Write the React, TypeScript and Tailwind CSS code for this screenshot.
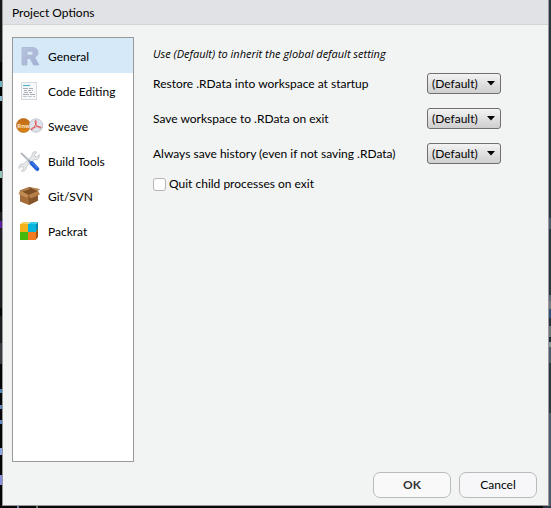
import { useState } from "react";
import type { ReactNode } from "react";

function RIcon() {
  return (
    <svg width="26" height="24" viewBox="-1 0 26 24" aria-hidden="true">
      <defs>
        <linearGradient id="r-fill" x1="0" y1="0" x2="1" y2="1">
          <stop offset="0" stopColor="#b9c3de" />
          <stop offset="1" stopColor="#a3b0d3" />
        </linearGradient>
      </defs>
      <path
        fillRule="evenodd"
        d="M5 3.500h9.500c4.500 0 6.500 1.800 6.500 5 0 2.500-1.200 4-3.200 4.800l4.200 7.700h-5.500l-3.300-6.500H10V21H5zM10 7.200v4h3.600c1.600 0 2.400-.7 2.400-2s-.8-2-2.400-2z"
        fill="url(#r-fill)"
        stroke="#a5b1cf"
        strokeWidth="0.700"
      />
    </svg>
  );
}

function CodeIcon() {
  return (
    <svg width="26" height="24" viewBox="-1 0 26 24" aria-hidden="true">
      <rect x="4.500" y="3.500" width="15" height="17" fill="#f7f8fa" stroke="#d5d8dd" />
      <path d="M6 6.500h7" stroke="#4fb4cc" strokeWidth="1.200" />
      <g stroke="#a9adb3" strokeWidth="1">
        <path d="M6 9.500h10" strokeDasharray="5 1" />
        <path d="M7 11.500h9" strokeDasharray="3 1" />
        <path d="M7 13.500h8" strokeDasharray="4 1" />
        <path d="M6 15.500h12" strokeDasharray="6 1" />
        <path d="M6 17.500h12" stroke="#c3c6cb" strokeDasharray="4 1" />
      </g>
    </svg>
  );
}

function SweaveIcon() {
  return (
    <svg width="28" height="24" viewBox="0 0 28 24" aria-hidden="true">
      <defs>
        <linearGradient id="rnw-fill" x1="0" y1="0" x2="0" y2="1">
          <stop offset="0" stopColor="#c06c1a" />
          <stop offset="1" stopColor="#d98413" />
        </linearGradient>
      </defs>
      <circle cx="7.500" cy="11.500" r="7" fill="url(#rnw-fill)" stroke="#b9691c" strokeWidth="0.700" />
      <text x="7.700" y="14" textAnchor="middle" fontSize="6" fontWeight="bold" fill="#fbe3c3" fontFamily="Open Sans, sans-serif">
        Rnw
      </text>
      <circle cx="20" cy="11.500" r="6.700" fill="#dfe3e9" stroke="#b5bcc7" strokeWidth="0.800" />
      <path
        d="M19.600 6.500c1.200 0 .6 3.200-.8 5.800-1.300 2.500-3 4-3.700 3.400-.7-.9 2.300-2.500 5.200-3 2.800-.5 5 .1 4.800 1-.3 1-2.800-.3-4.300-2.200-1.400-1.800-2.400-5-1.200-5z"
        fill="none"
        stroke="#e0565c"
        strokeWidth="1"
      />
    </svg>
  );
}

function ToolsIcon() {
  return (
    <svg width="26" height="24" viewBox="0 0 26 24" aria-hidden="true">
      <path
        d="M17.200 3.300c1.300-.7 2.700-.7 3.700-.2l-2.400 2.500.4 2 2 .4 2.200-2.400c.5 1.300.2 3-.8 4-1 1-2.400 1.300-3.700.9L10 18c.2 1.300-.2 2.700-1.200 3.500-1 .9-2.200 1-3.500.6l2.200-2.400-.5-1.800-1.900-.4L3 19.600c-.4-1.200 0-2.800 1-3.800s2.200-1.100 3.500-.7L16 7.200c-.3-1.400.2-2.900 1.200-3.900z"
        fill="#e6e8ea"
        stroke="#babfc4"
        strokeWidth="0.800"
      />
      <path d="M5.500 4.500 14 12.500" stroke="#b4bac0" strokeWidth="2" strokeLinecap="round" />
      <path d="M12.500 11.500 15 14" stroke="#8396b5" strokeWidth="2" />
      <path d="m15.800 14.300 5.400 5.600" stroke="#2460d6" strokeWidth="4.200" strokeLinecap="round" />
      <path d="m16.500 14 4.500 4.700" stroke="#5e92f2" strokeWidth="1" strokeLinecap="round" />
    </svg>
  );
}

function BoxIcon() {
  return (
    <svg width="26" height="24" viewBox="0 0 26 24" aria-hidden="true">
      <path d="M4 6.500 13.500 3l8.500 4v9.500L13 21l-9-3.500z" fill="#a46d38" />
      <path d="m4 6.500 9.500-3.500L22 7l-9.500 4z" fill="#7e5026" />
      <path d="m12.500 11 9.500-4v9.500L13 21z" fill="#85552a" />
      <path d="M4 6.500 2.500 10l8.500 4 1.500-3z" fill="#c08b54" />
      <path d="m12.500 11 2 3.500 9.500-4L22 7z" fill="#b67f48" />
      <path d="m4 6.500 9.500-3.500.2 2L6 7.700z" fill="#b5814d" />
      <path d="m22 7 2-1.500-2-1-8.500-1.500z" fill="#b98450" />
    </svg>
  );
}

function PackratIcon() {
  return (
    <svg width="26" height="24" viewBox="0 0 26 24" aria-hidden="true">
      <path d="m4 5 3-2h7l-2.500 2z" fill="#f6d25c" />
      <path d="m12 5 2.500-2H22l-2.500 2z" fill="#35cdea" />
      <path d="m20 5 2-2v7.500l-2 2z" fill="#0a87a8" />
      <path d="m20 12.500 2-2V18l-2 2.500z" fill="#a4530f" />
      <rect x="4" y="5" width="8" height="8" fill="#f5b21b" />
      <rect x="12" y="5" width="8" height="8" fill="#05b5dc" />
      <rect x="4" y="13" width="8" height="8" fill="#46b80b" />
      <rect x="12" y="13" width="8" height="8" fill="#f47b20" />
    </svg>
  );
}

const sections: { name: string; icon: ReactNode }[] = [
  { name: "General", icon: <RIcon /> },
  { name: "Code Editing", icon: <CodeIcon /> },
  { name: "Sweave", icon: <SweaveIcon /> },
  { name: "Build Tools", icon: <ToolsIcon /> },
  { name: "Git/SVN", icon: <BoxIcon /> },
  { name: "Packrat", icon: <PackratIcon /> },
];

const options = [
  { id: "restore", label: "Restore .RData into workspace at startup" },
  { id: "save", label: "Save workspace to .RData on exit" },
  { id: "history", label: "Always save history (even if not saving .RData)" },
];

function OptionRow({ id, label }: { id: string; label: string }) {
  return (
    <div className="flex h-[35px] items-center">
      <label htmlFor={id} className="w-[274px] shrink-0 whitespace-nowrap">
        {label}
      </label>
      <div className="relative flex">
        <select
          id={id}
          defaultValue="default"
          className="h-[21px] w-[74px] appearance-none rounded-[3px] border border-[#707070] bg-linear-to-b from-[#f3f3f3] to-[#cfcfcf] pl-[4px] text-[12px] leading-[18px] text-black"
        >
          <option value="default">(Default)</option>
          <option value="yes">Yes</option>
          <option value="no">No</option>
        </select>
        <svg className="pointer-events-none absolute top-[8px] right-[6px]" width="8" height="5" viewBox="0 0 8 5" aria-hidden="true">
          <path d="M0 0h8L4 4.500z" fill="#000" />
        </svg>
      </div>
    </div>
  );
}

// Slivers of the editor window that stay visible around the dialog.
const leftEdge: [number, string][] = [
  [62, "#17171a"], [19, "#000"], [6, "#6fb4c4"], [9, "#000"], [5, "#86b7c8"], [70, "#000"],
  [7, "#8fc5bd"], [34, "#000"], [9, "#1d1c20"], [7, "#5a1f9c"], [80, "#1d1c20"], [8, "#050507"],
  [27, "#1d1c20"], [21, "#3a3c42"], [25, "#050507"], [4, "#4b86b8"], [12, "#050507"], [4, "#5f86c0"],
  [11, "#050507"], [4, "#5f86c0"], [24, "#050507"], [7, "#8aa6e0"], [20, "#050507"], [10, "#8a8fdc"],
];

const rightEdge: [number, string][] = [
  [218, "#2b3643"], [11, "#4b5d6c"], [66, "#2b3643"], [6, "#5b6a77"], [8, "#777c80"], [9, "#2c4f74"],
  [8, "#27323f"], [11, "#6c7679"], [5, "#1f2c3c"], [5, "#8b9499"], [16, "#4b5d6c"], [50, "#2b3643"],
];

function Edge({ slices, rest }: { slices: [number, string][]; rest: string }) {
  return (
    <div aria-hidden="true" className={`flex w-[2px] shrink-0 flex-col overflow-hidden ${rest}`}>
      {slices.map(([height, backgroundColor], i) => (
        <div key={i} className="shrink-0" style={{ height, backgroundColor }} />
      ))}
    </div>
  );
}

export default function App() {
  const [selected, setSelected] = useState("General");

  return (
    <div className="flex h-screen flex-col bg-[#08080a] font-['Lato','Open_Sans',sans-serif] text-[12px] leading-[18px] text-black">
      <div className="flex min-h-0 grow">
        <Edge slices={leftEdge} rest="bg-[#050507]" />
        <div role="dialog" aria-labelledby="title" className="flex min-w-0 grow flex-col border border-t-0 border-[#999] bg-[#f2f4f4]">
          <h1 id="title" className="flex h-[25px] shrink-0 items-center border-b border-[#d4d5d7] bg-[#e1e2e5] px-[9px] pt-[2px]">
            Project Options
          </h1>
          <div className="flex min-h-0 grow gap-[19px] px-[9px] pt-[12px]">
            <nav aria-label="Sections" className="flex w-[122px] shrink-0 flex-col border border-[#999] bg-white">
              {sections.map(({ name, icon }) => (
                <button
                  key={name}
                  type="button"
                  onClick={() => setSelected(name)}
                  aria-current={name === selected}
                  className={`flex h-[35px] shrink-0 items-center pl-[3px] text-left ${name === selected ? "bg-[#d6e9f8]" : ""}`}
                >
                  <span className="flex w-[32px] shrink-0 items-center">{icon}</span>
                  <span className="pt-[2px]">{name}</span>
                </button>
              ))}
            </nav>
            <div className="flex min-w-0 grow flex-col pt-[8px]">
              <p className="whitespace-nowrap font-['Open_Sans',sans-serif] text-[11px] italic">
                Use (Default) to inherit the global default setting
              </p>
              <div className="flex flex-col pt-[3px]">
                {options.map((option) => (
                  <OptionRow key={option.id} {...option} />
                ))}
              </div>
              <label className="flex items-center gap-[3px] pt-[4px]">
                <input
                  type="checkbox"
                  className="size-[13px] appearance-none rounded-[3px] border border-[#b4b4b4] bg-white checked:bg-[#4a90d9]"
                />
                Quit child processes on exit
              </label>
            </div>
          </div>
          <div className="flex shrink-0 justify-end gap-[8px] px-[11px] pt-[10px] pb-[7px]">
            <button type="button" className="h-[26px] w-[78px] rounded-[7px] border border-[#bbb] bg-[#f9f9f9] font-bold text-[#333]">
              OK
            </button>
            <button type="button" className="h-[26px] w-[78px] rounded-[7px] border border-[#bbb] bg-[#f7f7fa]">
              Cancel
            </button>
          </div>
        </div>
        <Edge slices={rightEdge} rest="bg-[#4b5d6c]" />
      </div>
      <div aria-hidden="true" className="flex h-[2px] shrink-0">
        <div className="ml-[17px] w-[2px] bg-[#6f7fa8]" />
        <div className="ml-[17px] w-[2px] bg-[#5d7a5a]" />
        <div className="ml-auto w-[8px] bg-[#2b3643]" />
      </div>
    </div>
  );
}
